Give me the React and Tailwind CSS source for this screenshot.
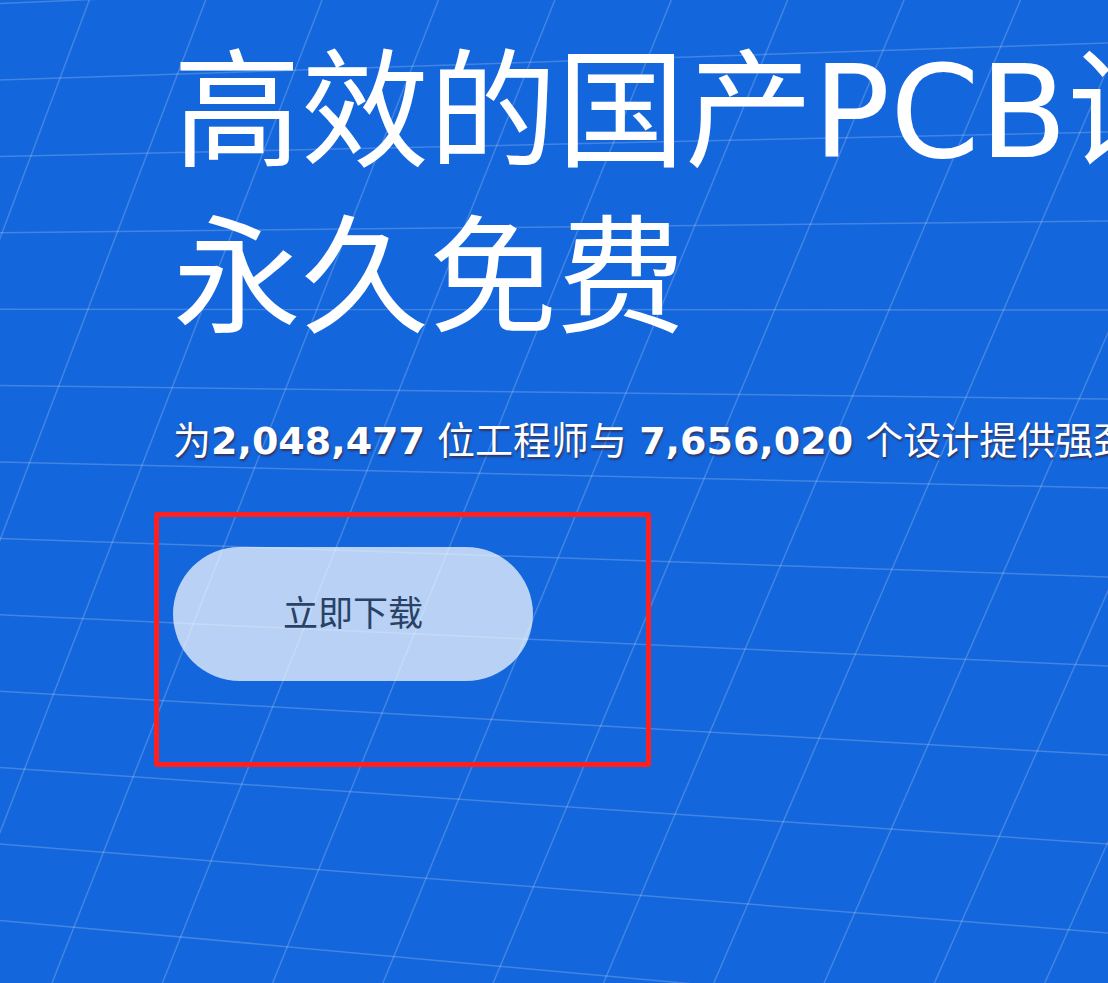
import React from "react";

// Perspective grid measured from the reference: "diagonal" lines run from the
// top edge to the bottom edge, "horizontal" lines from the left edge to the right edge.
const W = 1108;
const Hh = 983;

const DIAGONALS = Array.from({ length: 20 }, (_, i) => {
  const k = i - 3;
  return [89.3 + 116.4 * k, 0, -278.9 + 110.3 * k, Hh];
});

const HORIZONTALS = Array.from({ length: 17 }, (_, i) => {
  const j = i - 2;
  return [0, 80 + 76.4 * j, W, 43 + 89 * j];
});

function Grid() {
  return (
    <svg className="absolute inset-0 h-full w-full" width={W} height={Hh}>
      {[...DIAGONALS, ...HORIZONTALS].map(([x1, y1, x2, y2], i) => (
        <line
          key={i}
          x1={x1}
          y1={y1}
          x2={x2}
          y2={y2}
          stroke="#ffffff"
          strokeOpacity="0.2"
          strokeWidth="1.5"
        />
      ))}
    </svg>
  );
}

export default function App() {
  return (
    <div className="relative h-[983px] w-full overflow-hidden bg-[#1366dc] font-['DejaVu_Sans','Noto_Sans_CJK_SC',sans-serif] text-white">
      <Grid />
      <div className="relative flex flex-col pl-[173px] pt-[30px]">
        <h1 className="whitespace-nowrap text-[128px] font-normal leading-[166px]">
          高效的国产PCB设计工具
          <br />
          永久免费
        </h1>
        <p className="mt-[51px] whitespace-nowrap text-[38px] leading-[57px] [text-shadow:1px_2px_2px_rgba(70,20,20,0.6)]">
          为<span className="font-bold">2,048,477</span> 位工程师与{" "}
          <span className="font-bold">7,656,020</span> 个设计提供强劲动力
        </p>
        <div className="ml-[-19px] mt-[42px] h-[255px] w-[497px] rounded-[3px] border-[5px] border-[#ff1f1f] pl-[14px] pt-[30px]">
          <button className="flex h-[134px] w-[360px] items-center justify-center rounded-full bg-white text-[35px] text-[#333333] opacity-70">
            立即下载
          </button>
        </div>
      </div>
    </div>
  );
}
